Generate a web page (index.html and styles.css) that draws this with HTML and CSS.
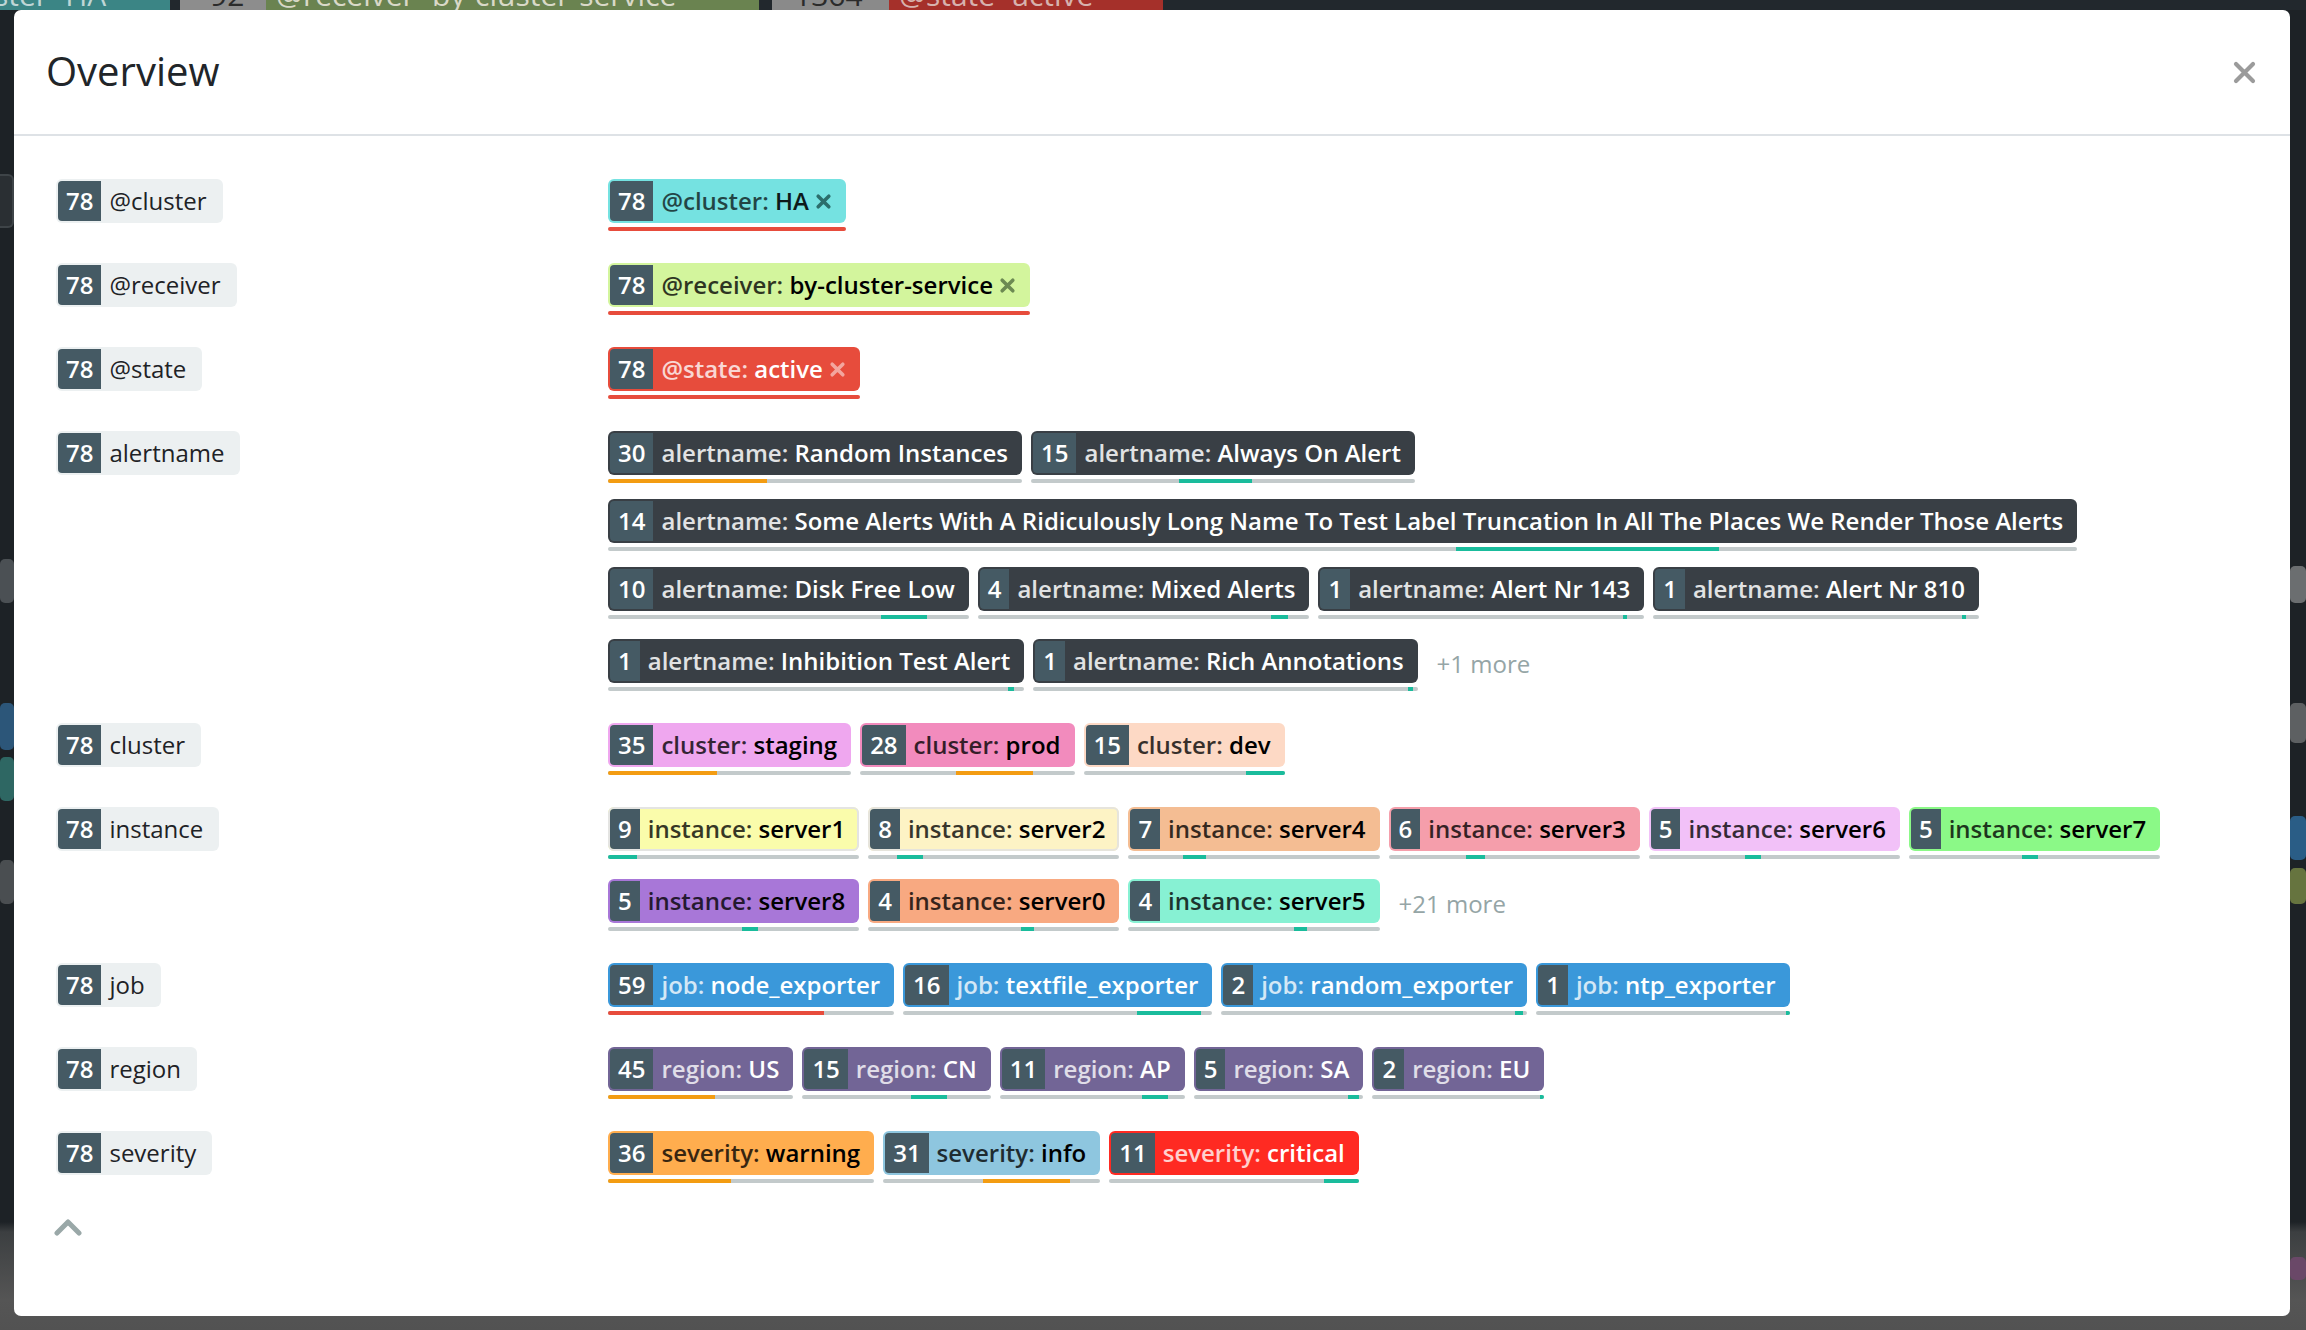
FILE: index.html
```html
<!DOCTYPE html>
<html lang="en">
<head>
<meta charset="utf-8">
<title>Overview</title>
<link rel="stylesheet" href="styles.css">
</head>
<body>
<div class="page">
  <div class="topbar">
    <span class="chip chip-teal">ster=HA ^</span>
    <span class="chip chip-gray">92</span>
    <span class="chip chip-olive">@receiver=by-cluster-service ^</span>
    <span class="chip chip-gray2">1364</span>
    <span class="chip chip-red">@state=active ^</span>
  </div>
  <div class="page-main">
    <div class="side side-left">
      <span class="blk lb1"></span>
      <span class="blk lb2"></span>
      <span class="blk lb3"></span>
      <span class="blk lb4"></span>
      <span class="blk lb5"></span>
    </div>
    <div class="side side-right">
      <span class="blk rb1"></span>
      <span class="blk rb2"></span>
      <span class="blk rb3"></span>
      <span class="blk rb4"></span>
      <span class="blk rb5"></span>
    </div>
  </div>
</div>

<div class="modal">
  <div class="modal-header">
    <h5 class="modal-title">Overview</h5>
    <button class="close" type="button" aria-label="Close">
      <svg width="23" height="23" viewBox="0 0 23 23"><path d="M3 3 L20 20 M20 3 L3 20" stroke="#9b9b9b" stroke-width="4.2" stroke-linecap="round"/></svg>
    </button>
  </div>
  <div class="modal-body">
    <div class="rows">

      <div class="row">
        <div class="row-key"><span class="badge key"><span class="count">78</span><span class="text">@cluster</span></span></div>
        <div class="row-values">
          <div class="item">
            <span class="badge filter c-ha"><span class="count">78</span><span class="text"><span class="ln">@cluster:</span> <span class="lv">HA</span></span><svg class="x" viewBox="0 0 16 16"><path d="M3 3 L13 13 M13 3 L3 13" stroke="currentColor" stroke-width="3.4" stroke-linecap="round"/></svg></span>
            <div class="bar"><span class="seg red" style="margin-left:0%;width:100%"></span></div>
          </div>
        </div>
      </div>

      <div class="row">
        <div class="row-key"><span class="badge key"><span class="count">78</span><span class="text">@receiver</span></span></div>
        <div class="row-values">
          <div class="item">
            <span class="badge filter c-recv"><span class="count">78</span><span class="text"><span class="ln">@receiver:</span> <span class="lv">by-cluster-service</span></span><svg class="x" viewBox="0 0 16 16"><path d="M3 3 L13 13 M13 3 L3 13" stroke="currentColor" stroke-width="3.4" stroke-linecap="round"/></svg></span>
            <div class="bar"><span class="seg red" style="margin-left:0%;width:100%"></span></div>
          </div>
        </div>
      </div>

      <div class="row">
        <div class="row-key"><span class="badge key"><span class="count">78</span><span class="text">@state</span></span></div>
        <div class="row-values">
          <div class="item">
            <span class="badge filter c-state"><span class="count">78</span><span class="text"><span class="ln">@state:</span> <span class="lv">active</span></span><svg class="x" viewBox="0 0 16 16"><path d="M3 3 L13 13 M13 3 L3 13" stroke="currentColor" stroke-width="3.4" stroke-linecap="round"/></svg></span>
            <div class="bar"><span class="seg red" style="margin-left:0%;width:100%"></span></div>
          </div>
        </div>
      </div>

      <div class="row">
        <div class="row-key"><span class="badge key"><span class="count">78</span><span class="text">alertname</span></span></div>
        <div class="row-values">
          <div class="item"><span class="badge c-dark"><span class="count">30</span><span class="text"><span class="ln">alertname:</span> <span class="lv">Random Instances</span></span></span><div class="bar"><span class="seg orange" style="margin-left:0%;width:38.46%"></span></div></div>
          <div class="item"><span class="badge c-dark"><span class="count">15</span><span class="text"><span class="ln">alertname:</span> <span class="lv">Always On Alert</span></span></span><div class="bar"><span class="seg teal" style="margin-left:38.46%;width:19.23%"></span></div></div>
          <div class="item"><span class="badge c-dark"><span class="count">14</span><span class="text"><span class="ln">alertname:</span> <span class="lv">Some Alerts With A Ridiculously Long Name To Test Label Truncation In All The Places We Render Those Alerts</span></span></span><div class="bar"><span class="seg teal" style="margin-left:57.69%;width:17.95%"></span></div></div>
          <div class="item"><span class="badge c-dark"><span class="count">10</span><span class="text"><span class="ln">alertname:</span> <span class="lv">Disk Free Low</span></span></span><div class="bar"><span class="seg teal" style="margin-left:75.64%;width:12.82%"></span></div></div>
          <div class="item"><span class="badge c-dark"><span class="count">4</span><span class="text"><span class="ln">alertname:</span> <span class="lv">Mixed Alerts</span></span></span><div class="bar"><span class="seg teal" style="margin-left:88.46%;width:5.13%"></span></div></div>
          <div class="item"><span class="badge c-dark"><span class="count">1</span><span class="text"><span class="ln">alertname:</span> <span class="lv">Alert Nr 143</span></span></span><div class="bar"><span class="seg teal" style="margin-left:93.59%;width:1.28%"></span></div></div>
          <div class="item"><span class="badge c-dark"><span class="count">1</span><span class="text"><span class="ln">alertname:</span> <span class="lv">Alert Nr 810</span></span></span><div class="bar"><span class="seg teal" style="margin-left:94.87%;width:1.28%"></span></div></div>
          <div class="item"><span class="badge c-dark"><span class="count">1</span><span class="text"><span class="ln">alertname:</span> <span class="lv">Inhibition Test Alert</span></span></span><div class="bar"><span class="seg teal" style="margin-left:96.15%;width:1.28%"></span></div></div>
          <div class="item"><span class="badge c-dark"><span class="count">1</span><span class="text"><span class="ln">alertname:</span> <span class="lv">Rich Annotations</span></span></span><div class="bar"><span class="seg teal" style="margin-left:97.44%;width:1.28%"></span></div></div>
          <span class="more">+1 more</span>
        </div>
      </div>

      <div class="row">
        <div class="row-key"><span class="badge key"><span class="count">78</span><span class="text">cluster</span></span></div>
        <div class="row-values">
          <div class="item"><span class="badge c-staging"><span class="count">35</span><span class="text"><span class="ln">cluster:</span> <span class="lv">staging</span></span></span><div class="bar"><span class="seg orange" style="margin-left:0%;width:44.87%"></span></div></div>
          <div class="item"><span class="badge c-prod"><span class="count">28</span><span class="text"><span class="ln">cluster:</span> <span class="lv">prod</span></span></span><div class="bar"><span class="seg orange" style="margin-left:44.87%;width:35.9%"></span></div></div>
          <div class="item"><span class="badge c-dev"><span class="count">15</span><span class="text"><span class="ln">cluster:</span> <span class="lv">dev</span></span></span><div class="bar"><span class="seg teal" style="margin-left:80.77%;width:19.23%"></span></div></div>
        </div>
      </div>

      <div class="row">
        <div class="row-key"><span class="badge key"><span class="count">78</span><span class="text">instance</span></span></div>
        <div class="row-values">
          <div class="item"><span class="badge c-s1"><span class="count">9</span><span class="text"><span class="ln">instance:</span> <span class="lv">server1</span></span></span><div class="bar"><span class="seg teal" style="margin-left:0%;width:11.54%"></span></div></div>
          <div class="item"><span class="badge c-s2"><span class="count">8</span><span class="text"><span class="ln">instance:</span> <span class="lv">server2</span></span></span><div class="bar"><span class="seg teal" style="margin-left:11.54%;width:10.26%"></span></div></div>
          <div class="item"><span class="badge c-s4"><span class="count">7</span><span class="text"><span class="ln">instance:</span> <span class="lv">server4</span></span></span><div class="bar"><span class="seg teal" style="margin-left:21.79%;width:8.97%"></span></div></div>
          <div class="item"><span class="badge c-s3"><span class="count">6</span><span class="text"><span class="ln">instance:</span> <span class="lv">server3</span></span></span><div class="bar"><span class="seg teal" style="margin-left:30.77%;width:7.69%"></span></div></div>
          <div class="item"><span class="badge c-s6"><span class="count">5</span><span class="text"><span class="ln">instance:</span> <span class="lv">server6</span></span></span><div class="bar"><span class="seg teal" style="margin-left:38.46%;width:6.41%"></span></div></div>
          <div class="item"><span class="badge c-s7"><span class="count">5</span><span class="text"><span class="ln">instance:</span> <span class="lv">server7</span></span></span><div class="bar"><span class="seg teal" style="margin-left:44.87%;width:6.41%"></span></div></div>
          <div class="item"><span class="badge c-s8"><span class="count">5</span><span class="text"><span class="ln">instance:</span> <span class="lv">server8</span></span></span><div class="bar"><span class="seg teal" style="margin-left:53.5%;width:6.41%"></span></div></div>
          <div class="item"><span class="badge c-s0"><span class="count">4</span><span class="text"><span class="ln">instance:</span> <span class="lv">server0</span></span></span><div class="bar"><span class="seg teal" style="margin-left:61%;width:5.13%"></span></div></div>
          <div class="item"><span class="badge c-s5"><span class="count">4</span><span class="text"><span class="ln">instance:</span> <span class="lv">server5</span></span></span><div class="bar"><span class="seg teal" style="margin-left:66%;width:5.13%"></span></div></div>
          <span class="more">+21 more</span>
        </div>
      </div>

      <div class="row">
        <div class="row-key"><span class="badge key"><span class="count">78</span><span class="text">job</span></span></div>
        <div class="row-values">
          <div class="item"><span class="badge c-job"><span class="count">59</span><span class="text"><span class="ln">job:</span> <span class="lv">node_exporter</span></span></span><div class="bar"><span class="seg red" style="margin-left:0%;width:75.64%"></span></div></div>
          <div class="item"><span class="badge c-job"><span class="count">16</span><span class="text"><span class="ln">job:</span> <span class="lv">textfile_exporter</span></span></span><div class="bar"><span class="seg teal" style="margin-left:75.64%;width:20.51%"></span></div></div>
          <div class="item"><span class="badge c-job"><span class="count">2</span><span class="text"><span class="ln">job:</span> <span class="lv">random_exporter</span></span></span><div class="bar"><span class="seg teal" style="margin-left:96.15%;width:2.56%"></span></div></div>
          <div class="item"><span class="badge c-job"><span class="count">1</span><span class="text"><span class="ln">job:</span> <span class="lv">ntp_exporter</span></span></span><div class="bar"><span class="seg teal" style="margin-left:98.72%;width:1.28%"></span></div></div>
        </div>
      </div>

      <div class="row">
        <div class="row-key"><span class="badge key"><span class="count">78</span><span class="text">region</span></span></div>
        <div class="row-values">
          <div class="item"><span class="badge c-region"><span class="count">45</span><span class="text"><span class="ln">region:</span> <span class="lv">US</span></span></span><div class="bar"><span class="seg orange" style="margin-left:0%;width:57.69%"></span></div></div>
          <div class="item"><span class="badge c-region"><span class="count">15</span><span class="text"><span class="ln">region:</span> <span class="lv">CN</span></span></span><div class="bar"><span class="seg teal" style="margin-left:57.69%;width:19.23%"></span></div></div>
          <div class="item"><span class="badge c-region"><span class="count">11</span><span class="text"><span class="ln">region:</span> <span class="lv">AP</span></span></span><div class="bar"><span class="seg teal" style="margin-left:76.92%;width:14.1%"></span></div></div>
          <div class="item"><span class="badge c-region"><span class="count">5</span><span class="text"><span class="ln">region:</span> <span class="lv">SA</span></span></span><div class="bar"><span class="seg teal" style="margin-left:91.03%;width:6.41%"></span></div></div>
          <div class="item"><span class="badge c-region"><span class="count">2</span><span class="text"><span class="ln">region:</span> <span class="lv">EU</span></span></span><div class="bar"><span class="seg teal" style="margin-left:97.44%;width:2.56%"></span></div></div>
        </div>
      </div>

      <div class="row">
        <div class="row-key"><span class="badge key"><span class="count">78</span><span class="text">severity</span></span></div>
        <div class="row-values">
          <div class="item"><span class="badge c-warn"><span class="count">36</span><span class="text"><span class="ln">severity:</span> <span class="lv">warning</span></span></span><div class="bar"><span class="seg orange" style="margin-left:0%;width:46.15%"></span></div></div>
          <div class="item"><span class="badge c-info"><span class="count">31</span><span class="text"><span class="ln">severity:</span> <span class="lv">info</span></span></span><div class="bar"><span class="seg orange" style="margin-left:46.15%;width:39.74%"></span></div></div>
          <div class="item"><span class="badge c-crit"><span class="count">11</span><span class="text"><span class="ln">severity:</span> <span class="lv">critical</span></span></span><div class="bar"><span class="seg teal" style="margin-left:85.9%;width:14.1%"></span></div></div>
        </div>
      </div>

    </div>
    <div class="collapse">
      <svg width="28" height="18" viewBox="0 0 28 18"><path d="M3 15 L14 4 L25 15" fill="none" stroke="#9aa8a8" stroke-width="5" stroke-linecap="round" stroke-linejoin="round"/></svg>
    </div>
  </div>
</div>
</body>
</html>
```

FILE: styles.css
```css
html, body {
  margin: 0;
  padding: 0;
}

body {
  width: 2306px;
  height: 1330px;
  overflow: hidden;
  position: relative;
  font-family: "Open Sans", "Noto Sans", sans-serif;
  background: linear-gradient(to bottom, #1d2226 0, #1d2226 1222px, #3c3f41 1232px, #555 1300px, #525252 1330px);
}

/* dimmed page behind the modal */
.page {
  height: 1330px;
  overflow: hidden;
}

.topbar {
  display: flex;
  align-items: flex-end;
  height: 10px;
  overflow: hidden;
  background: #22282d;
}

.chip {
  flex: none;
  height: 30px;
  line-height: 30px;
  font-size: 30px;
  color: #c8c8c8;
  padding: 0 10px;
  box-sizing: border-box;
  white-space: nowrap;
  overflow: hidden;
}

.chip-teal { width: 176px; background: #3b8585; padding-left: 0; margin-left: -6px; color: #bfd6d6; }
.chip-gray { width: 86px; margin-left: 10px; background: #8d8d8d; color: #2b2b2b; padding-left: 30px; }
.chip-olive { width: 493px; background: #6a8350; color: #d9d9c8; }
.chip-gray2 { width: 117px; margin-left: 13px; background: #8a8a8a; color: #2b2b2b; padding-left: 22px; }
.chip-red { width: 274px; background: #a5302a; color: #d7b2ae; }

.page-main {
  display: flex;
  justify-content: space-between;
}

.side {
  display: flex;
  flex-direction: column;
  width: 14px;
}

.side-right {
  width: 16px;
}

.blk {
  display: block;
  border-radius: 5px;
}

.lb1 { margin-top: 164px; height: 50px; background: #2a2f33; border: 2px solid #3e4448; border-left: 0; border-radius: 0 6px 6px 0; }
.lb2 { margin-top: 331px; height: 44px; background: #4b5054; }
.lb3 { margin-top: 100px; height: 47px; background: #2c5679; }
.lb4 { margin-top: 7px; height: 44px; background: #2e6763; }
.lb5 { margin-top: 59px; height: 44px; background: #4a4e51; }

.rb1 { margin-top: 556px; height: 37px; background: #6b6e70; }
.rb2 { margin-top: 100px; height: 40px; background: #5d6062; }
.rb3 { margin-top: 73px; height: 44px; background: #2a5d86; }
.rb4 { margin-top: 8px; height: 36px; background: #66743f; }
.rb5 { margin-top: 353px; height: 23px; background: #6a4868; }

/* modal */
.modal {
  position: absolute;
  top: 10px;
  left: 14px;
  width: 2276px;
  height: 1306px;
  background: #fff;
  border-radius: 7px;
  overflow: hidden;
}

.modal-header {
  height: 124px;
  display: flex;
  align-items: center;
  justify-content: space-between;
  padding: 0 34px 0 32px;
  border-bottom: 2px solid #dee2e6;
}

.modal-title {
  margin: 0;
  font-size: 40px;
  font-weight: 400;
  color: #212529;
  line-height: 1.2;
  padding-bottom: 3px;
}

.close {
  border: 0;
  background: transparent;
  padding: 0;
  width: 23px;
  height: 23px;
  display: flex;
}

.modal-body {
  padding: 43px 42px 0 42px;
}

.rows {
  display: flex;
  flex-direction: column;
  gap: 32px;
}

.row {
  display: flex;
  align-items: flex-start;
}

.row-key {
  flex: none;
  width: 552px;
}

.row-values {
  flex: 1;
  display: flex;
  flex-wrap: wrap;
  align-items: flex-end;
  gap: 16px 9px;
}

.item {
  display: flex;
  flex-direction: column;
  gap: 4px;
}

/* badges */
.badge {
  display: inline-flex;
  align-items: center;
  height: 44px;
  padding: 2px;
  box-sizing: border-box;
  border-radius: 6px;
  font-size: 24px;
  white-space: nowrap;
  color: #000;
}

.count {
  height: 40px;
  line-height: 40px;
  padding: 0 8px;
  background: #455a64;
  color: #fff;
  font-weight: 600;
  border-radius: 4px 0 0 4px;
}

.text {
  line-height: 40px;
  padding: 0 12px 0 8px;
}

.ln {
  font-weight: 600;
  opacity: 0.78;
}

.lv {
  font-weight: 600;
}

.key {
  background: #ecf0f1;
  color: #1e2226;
}

.key .text {
  padding-right: 14px;
  font-weight: 400;
}

.filter .text {
  padding-right: 6px;
}

.x {
  width: 17px;
  height: 17px;
  margin-right: 12px;
  opacity: 0.55;
}

.c-ha { background: #75e2e1; color: #0d1a1a; }
.c-ha .x { color: #2c6e6c; opacity: 1; }
.c-recv { background: #d3f59d; }
.c-recv .x { color: #6c8a52; opacity: 1; }
.c-state { background: #e74c3c; color: #fff; }
.c-state .x { opacity: 0.5; }
.c-dark { background: #393f45; color: #fff; }
.c-dark .ln { opacity: 0.85; }
.c-staging { background: #efa7ef; }
.c-prod { background: #f28bbd; }
.c-dev { background: #fdd9c5; }
.c-s1 { background: #fafcab; box-shadow: inset 0 0 0 2px #e4e4e2; }
.c-s2 { background: #fdf3c5; box-shadow: inset 0 0 0 2px #e6e4dc; }
.c-s4 { background: #f4bd93; }
.c-s3 { background: #f59eab; }
.c-s6 { background: #f2c1f8; }
.c-s7 { background: #8bf987; }
.c-s8 { background: #a877d8; }
.c-s0 { background: #f8a981; }
.c-s5 { background: #87f1d3; }
.c-job { background: #3a98da; color: #fff; }
.c-region { background: #726596; color: #fff; }
.c-warn { background: #ffad4e; }
.c-info { background: #8ec6df; }
.c-crit { background: #ff2a22; color: #fff; }

/* percentage bars */
.bar {
  display: flex;
  height: 4px;
  background: #c3cacb;
  border-radius: 2px;
  overflow: hidden;
}

.seg {
  display: block;
  height: 4px;
}

.seg.red { background: #e74c3c; }
.seg.orange { background: #f39c12; }
.seg.teal { background: #1abc9c; }

.more {
  height: 56px;
  box-sizing: border-box;
  padding: 11px 0 9px 10px;
  line-height: 36px;
  font-size: 24px;
  color: #95a5a6;
}

.collapse {
  margin: 35px 0 0 -2px;
  height: 18px;
  display: flex;
}
```
